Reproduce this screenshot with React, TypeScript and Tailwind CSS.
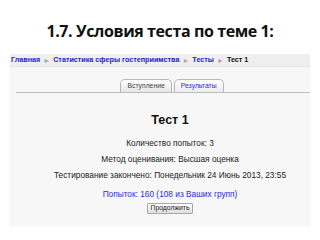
import React from 'react';

const crumbs = ['Главная', 'Статистика сферы гостеприимства', 'Тесты'];

function Arrow() {
  return <span className="mx-[3px] text-[7px] text-[#a8a8a8]">►</span>;
}

export default function App() {
  return (
    <div className="w-[320px] h-[240px] bg-white overflow-hidden" style={{ fontFamily: '"Liberation Sans", Arial, sans-serif' }}>
      <div className="h-[54px] flex justify-center pt-[23px]">
        <h1 className="text-[16px] font-bold text-[#111] tracking-[-0.4px] leading-none" style={{ fontFamily: '"Open Sans", sans-serif' }}>
          1.7. Условия теста по теме 1:
        </h1>
      </div>

      <div className="mx-[10px] h-[172px] bg-[#f7f7f7]">
        <div className="h-[13px] bg-[#efefef] border-b border-[#e2e2e2] flex items-center pl-[1px] text-[7.2px] font-bold leading-none">
          {crumbs.map(c => (
            <React.Fragment key={c}>
              <span className="text-[#1a1ad8]">{c}</span>
              <Arrow />
            </React.Fragment>
          ))}
          <span className="text-[#111]">Тест 1</span>
        </div>

        <div className="ml-[6px] mt-[12px] border-b border-[#bdbdbd] flex justify-center pl-[18px] gap-[2px] text-[6.8px] leading-none">
          <div className="h-[13px] px-[6px] flex items-center rounded-t-[5px] border border-b-0 border-[#b8b8b8] bg-gradient-to-b from-white to-[#e6e6e6] text-[#444]">
            Вступление
          </div>
          <div className="h-[13px] px-[6px] flex items-center rounded-t-[5px] border border-b-0 border-[#b8b8b8] bg-gradient-to-b from-white to-[#ececec] text-[#2a2ae0]">
            Результаты
          </div>
        </div>

        <div className="pl-[20px] flex flex-col items-center text-[8.3px] text-[#222] leading-none">
          <div className="mt-[21px] text-[12.5px] font-bold text-[#111]">Тест 1</div>
          <div className="mt-[12px]">Количество попыток: 3</div>
          <div className="mt-[8px]">Метод оценивания: Высшая оценка</div>
          <div className="mt-[8px]">Тестирование закончено: Понедельник 24 Июнь 2013, 23:55</div>
          <div className="mt-[11px] text-[#2a2ae0]">Попыток: 160 (108 из Ваших групп)</div>
          <button className="mt-[4px] h-[11px] px-[3px] border border-[#a8a8a8] rounded-[1px] bg-gradient-to-b from-white to-[#dedede] text-[6.8px] text-[#222] leading-none">
            Продолжить
          </button>
        </div>
      </div>
    </div>
  );
}
